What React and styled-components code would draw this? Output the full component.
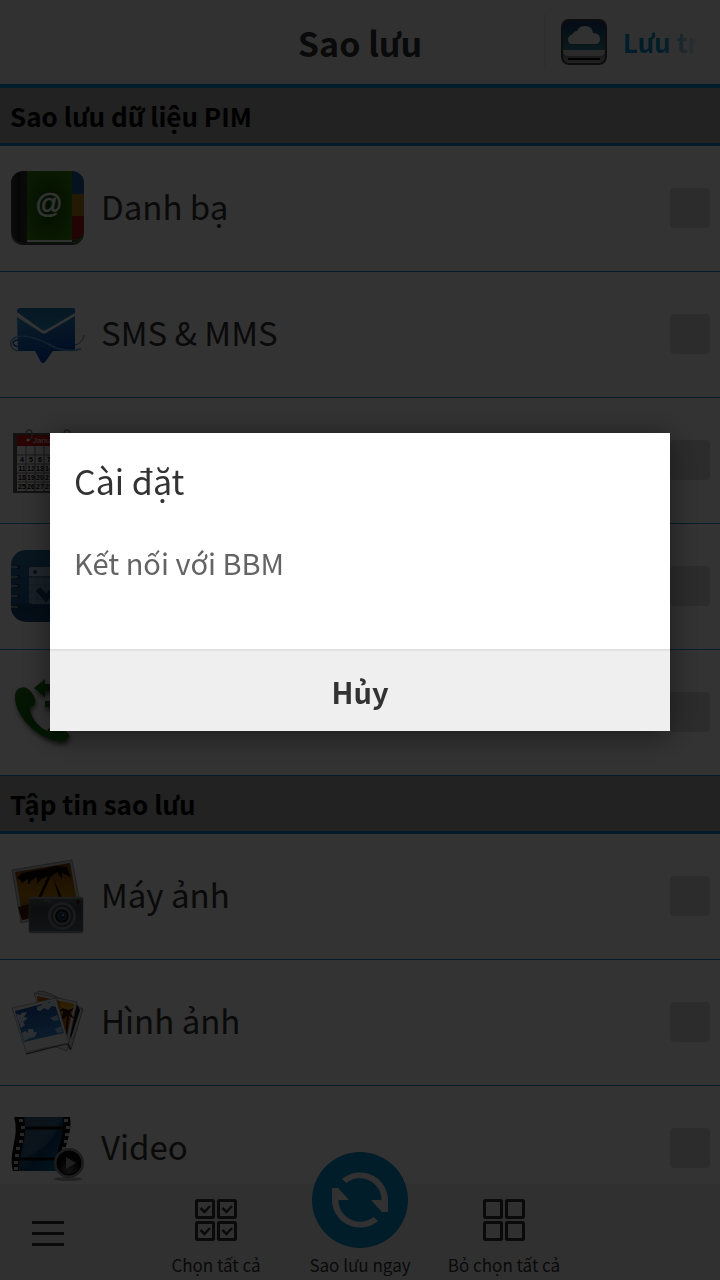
import styled, { createGlobalStyle } from "styled-components";

const GlobalStyle = createGlobalStyle`
  * {
    box-sizing: border-box;
  }
  body {
    margin: 0;
    background: #fcfcfc;
    font-family: "Noto Sans CJK SC", "Noto Sans", sans-serif;
    color: #323232;
  }
  button, input {
    font: inherit;
    color: inherit;
  }
`;

const Screen = styled.div`
  height: 100vh;
  display: flex;
  flex-direction: column;
  overflow: hidden;
`;

const Header = styled.header`
  flex: none;
  height: 88px;
  display: grid;
  grid-template-columns: 176px 1fr 176px;
  align-items: center;
  background: #f2f2f2;
  border-bottom: 4px solid #0092cc;
`;
const Title = styled.h1`
  grid-column: 2;
  margin: 0;
  padding-top: 2px;
  font-size: 34px;
  line-height: 42px;
  font-weight: 700;
  text-align: center;
`;
const Storage = styled.a`
  height: 56px;
  padding-left: 15px;
  display: flex;
  align-items: center;
  gap: 16px;
  border-left: 2px solid #e4e4e4;
  color: #0092cc;
  text-decoration: none;
`;
const StorageName = styled.span`
  font-size: 26px;
  line-height: 40px;
  font-weight: 700;
  white-space: nowrap;
  mask-image: linear-gradient(to right, #000 50%, transparent 100%);
`;

const List = styled.main`
  flex: 1;
  min-height: 0;
  overflow: hidden;
`;
const SectionTitle = styled.h2`
  margin: 0;
  height: 58px;
  padding: 0 10px;
  background: #a8a8a8;
  border-bottom: 3px solid #0092cc;
  color: #000;
  font-size: 26px;
  line-height: 55px;
  font-weight: 700;
`;
const Row = styled.label`
  height: 126px;
  padding: 0 10px 1px;
  display: flex;
  align-items: center;
  gap: 16px;
  border-bottom: 1px solid #0092cc;
`;
const RowName = styled.span`
  flex: 1;
  padding-bottom: 4px;
  font-size: 33px;
  line-height: 40px;
`;
const CheckBox = styled.input`
  appearance: none;
  width: 40px;
  height: 40px;
  margin: 0;
  border-radius: 4px;
  background: #dcdcdc;
  &:checked {
    background: #0092cc;
  }
`;

const ActionBar = styled.footer`
  flex: none;
  height: 96px;
  display: grid;
  grid-template-columns: repeat(5, 1fr);
  background: #f0f0f0;
`;
const Action = styled.button`
  padding: 0 0 3px;
  border: none;
  background: none;
  display: flex;
  flex-direction: column;
  align-items: center;
  justify-content: flex-end;
  gap: 12px;
  font-size: 17px;
  line-height: 24px;
  white-space: nowrap;
`;
const MainAction = styled(Action)`
  gap: 5px;
  margin-top: -32px;
`;
const MenuButton = styled.button`
  padding: 3px 32px 0;
  border: none;
  background: none;
  display: flex;
  align-items: center;
`;

const Overlay = styled.div`
  position: fixed;
  inset: 0;
  padding: 0 50px 116px;
  display: flex;
  align-items: center;
  background: rgba(0, 0, 0, 0.8);
`;
const Dialog = styled.section`
  width: 100%;
  background: #fff;
  box-shadow: 0 4px 30px rgba(0, 0, 0, 0.5);
`;
const DialogBody = styled.div`
  padding: 26px 24px 66px;
`;
const DialogTitle = styled.h2`
  margin: 0 0 38px;
  font-size: 34px;
  line-height: 44px;
  font-weight: 400;
`;
const DialogOption = styled.button`
  display: block;
  padding: 0;
  border: none;
  background: none;
  color: #646464;
  font-size: 29px;
  line-height: 42px;
`;
const DialogCancel = styled.button`
  width: 100%;
  height: 82px;
  padding: 0;
  border: none;
  border-top: 2px solid #e1e1e1;
  background: #efefef;
  font-size: 29px;
  line-height: 40px;
  font-weight: 700;
`;

const ItemSvg = ({ children }) => (
  <svg width="75" height="74" viewBox="0 0 75 74" overflow="visible" aria-hidden="true">
    {children}
  </svg>
);

const ContactsIcon = () => (
  <ItemSvg>
    <defs>
      <clipPath id="bookClip">
        <rect x="1" y="0" width="73" height="72" rx="12" />
      </clipPath>
      <radialGradient id="bookGreen" cx=".5" cy=".5" r=".75">
        <stop offset="0" stopColor="#004400" />
        <stop offset=".5" stopColor="#2a7008" />
        <stop offset="1" stopColor="#3a9010" />
      </radialGradient>
      <linearGradient id="spine" x2="1">
        <stop offset="0" stopColor="#444" />
        <stop offset=".5" stopColor="#222" />
        <stop offset="1" stopColor="#333" />
      </linearGradient>
    </defs>
    <rect x="1" y="1" width="73" height="73" rx="12" fill="#444" />
    <g clipPath="url(#bookClip)">
      <rect width="75" height="75" fill="#eee" />
      <rect width="17" height="75" fill="url(#spine)" />
      <rect x="17" width="45" height="69" fill="url(#bookGreen)" />
      <rect x="62" width="12" height="23" fill="#1a5a9c" />
      <rect x="62" y="23" width="12" height="22" fill="#b48010" />
      <path d="M62 45h12v15q0 9-12 9z" fill="#a81818" />
      <path d="M62 69q9 0 12-8v6q-3 5-9 5H17v-1h45z" fill="#247010" />
    </g>
    <text
      x="39"
      y="42"
      textAnchor="middle"
      fontSize="27"
      fontFamily="Liberation Sans"
      fill="#fff"
      stroke="#fff"
      strokeWidth=".6"
    >
      @
    </text>
  </ItemSvg>
);

const MessageIcon = () => (
  <ItemSvg>
    <defs>
      <linearGradient id="mail" x2=".3" y2="1">
        <stop offset="0" stopColor="#3496c8" />
        <stop offset="1" stopColor="#0040b4" />
      </linearGradient>
      <linearGradient id="flap" y2="1" x2="0">
        <stop offset="0" stopColor="#1c78b0" />
        <stop offset="1" stopColor="#2b8cc0" />
      </linearGradient>
    </defs>
    <path d="M7 13q1-2 3-2h53q2 0 2 2v3L36 33q-2 1-4 0L7 15z" fill="url(#flap)" />
    <path d="M7 20l25 16q2 1 4 0l29-17v33q0 2-2 2H43l-8 11q-2 2-4 0l-6-11H8z" fill="url(#mail)" />
    <path d="M8 54C-2 51-1 42 7 40c12-3 24 3 33 8s20 7 31 4" fill="none" stroke="#5aa8dc" strokeWidth="1.5" />
    <path d="M9 50C0 48 2 43 10 43c9 0 20 5 29 9" fill="none" stroke="#1468c0" strokeWidth="1.5" />
    <path d="M65 48c5-1 8-5 9-10" fill="none" stroke="#3c88b8" strokeWidth="1" />
  </ItemSvg>
);

// the sheet shows the first four days of each week
const weeks = [
  [4, 5, 6, 7],
  [11, 12, 13, 14],
  [18, 19, 20, 21],
  [25, 26, 27, 28],
];

const CalendarIcon = () => (
  <ItemSvg>
    <rect x="3" y="10" width="70" height="60" fill="#5a5a5a" />
    <rect x="7" y="12" width="63" height="11" fill="#d01010" />
    <rect x="7" y="23" width="63" height="45" fill="#f4f4f4" />
    <path
      d="M7 32h63M7 41h63M7 50h63M7 59h63M16 23v45M25 23v45M34 23v45M43 23v45M52 23v45M61 23v45"
      stroke="#777"
      strokeWidth="1"
    />
    <text x="23" y="20" fontSize="8" fontFamily="Liberation Sans" fill="#fff">Janu</text>
    <g fontSize="7" fontWeight="700" fontFamily="Liberation Sans" fill="#000" textAnchor="middle">
      {weeks.map((week, r) =>
        week.map((day, c) => (
          <text key={day} x={12 + c * 9} y={39 + r * 9}>
            {day}
          </text>
        ))
      )}
    </g>
    <path d="M16 11q0-4 3-4t3 4q0 5-3 6M54 11q0-4 3-4t3 4q0 5-3 6" fill="none" stroke="#888" strokeWidth="1.4" />
    <circle cx="18" cy="17" r="1.6" fill="#fff" />
  </ItemSvg>
);

const TasksIcon = () => (
  <ItemSvg>
    <defs>
      <linearGradient id="pad" x2="0" y2="1">
        <stop offset="0" stopColor="#2a70a0" />
        <stop offset=".7" stopColor="#1c5a90" />
        <stop offset=".8" stopColor="#12406e" />
        <stop offset="1" stopColor="#184c80" />
      </linearGradient>
    </defs>
    <rect x="1" y="1" width="73" height="72" rx="15" fill="url(#pad)" />
    <rect x="19" y="18" width="40" height="37" rx="3" fill="#78a4c4" />
    <path d="M19 27V21q0-3 3-3h34q3 0 3 3v6z" fill="#a8c4d8" />
    <path d="M27 29v26M35 29v26M43 29v26M19 36h40M19 43h40M19 50h40" stroke="#4a80a8" strokeWidth=".6" />
    <path d="M19 28h40" stroke="#2a5a84" strokeWidth="1" />
    <circle cx="25" cy="23" r="2" fill="#1c4a74" />
    <path d="M28 40l8 9 16-18" fill="none" stroke="#124478" strokeWidth="6" />
    {[18, 28, 37, 47, 58].map((y) => (
      <g key={y}>
        <circle cx="8" cy={y} r="2" fill="#0c2c48" />
        <path d={`M1 ${y}h7`} stroke="#aaa" strokeWidth="1.5" />
      </g>
    ))}
  </ItemSvg>
);

const CallIcon = () => (
  <ItemSvg>
    <defs>
      <linearGradient id="phone" x2="1" y2="1">
        <stop offset="0" stopColor="#287018" />
        <stop offset=".5" stopColor="#006400" />
        <stop offset="1" stopColor="#248024" />
      </linearGradient>
      <filter id="phoneShadow">
        <feDropShadow dx="1" dy="3" stdDeviation="2" floodOpacity=".6" />
      </filter>
    </defs>
    <g fill="url(#phone)" filter="url(#phoneShadow)">
      <path d="M10 13c6-3 13 4 15 11 1 5-1 7-5 8 0 10 7 19 17 24 4-6 8-5 14-2 6 2 9 5 8 8-2 5-9 6-17 3C23 59 4 38 5 21c0-4 2-7 5-8z" />
      <path d="M24 13L35 4v5h22v7H35v6zM35 26h20v6H35z" />
    </g>
  </ItemSvg>
);

const CameraIcon = () => (
  <ItemSvg>
    <defs>
      <linearGradient id="sunset" x2="0" y2="1">
        <stop offset="0" stopColor="#70380c" />
        <stop offset=".55" stopColor="#b87808" />
        <stop offset="1" stopColor="#702800" />
      </linearGradient>
      <linearGradient id="body" x2="0" y2="1">
        <stop offset="0" stopColor="#5c646c" />
        <stop offset=".3" stopColor="#3c444c" />
        <stop offset="1" stopColor="#586068" />
      </linearGradient>
    </defs>
    <path d="M2 11L62 1l9 48-60 15z" fill="#ccc" stroke="#777" strokeWidth=".7" />
    <path d="M5 13l55-9 8 44-55 13z" fill="url(#sunset)" />
    <path
      d="M7 19l5-5 10-2 12-2 12-3 11 1 4 11-4-3-5-2 0 6-5-7-4 3 2 7 9 20h-4L43 17l-2 0-11 24h-3l11-24-7 3-4 5 0-7-5 3-4 5 0-6-6 4-2-3z"
      fill="#100800"
    />
    <path d="M12 61l8-2V45l-12 3z" fill="#441400" />
    <rect x="19" y="38" width="54" height="36" rx="2" fill="url(#body)" stroke="#888" strokeWidth=".6" />
    <path d="M20 39h52" stroke="#999" strokeWidth="1.5" />
    <path d="M20 73h53" stroke="#bbb" strokeWidth="1" />
    <circle cx="52" cy="57" r="14" fill="#747c80" />
    <circle cx="52" cy="57" r="12" fill="#484c50" stroke="#aaa" strokeWidth=".8" />
    <circle cx="52" cy="57" r="8" fill="#181c20" stroke="#888" strokeWidth="2" />
    <circle cx="52" cy="57" r="4" fill="#182c58" stroke="#556" />
    <circle cx="53" cy="56" r="1" fill="#a8b8ff" />
    <circle cx="68" cy="43" r="2" fill="#401018" />
    <rect x="34" y="41" width="7" height="2" fill="#777" />
  </ItemSvg>
);

const PhotosIcon = () => (
  <ItemSvg>
    <defs>
      <linearGradient id="sky" x2=".3" y2="1">
        <stop offset="0" stopColor="#143c98" />
        <stop offset="1" stopColor="#3490d8" />
      </linearGradient>
    </defs>
    <path d="M25 10l3-4 8 1 37 17-12 40-5-2z" fill="#d8d8d8" stroke="#555" strokeWidth=".6" />
    <path d="M70 25l-3-6-8 32 2 2z" fill="#181818" />
    <path d="M24 8l43 9-10 49-16-6z" fill="#e8e8e8" stroke="#777" strokeWidth=".6" />
    <path d="M27 11l37 8-7 33-25-5z" fill="#b46000" />
    <path d="M50 16l14 3-4 14-9-5z" fill="#dc9c14" />
    <path d="M55 50l2-19-6 5 2-10-6 1 6-4 5 2 6-2-4 5 5 6-6-3-2 19z" fill="#321000" />
    <path d="M16 69l39-10 3 0 3 6" fill="none" stroke="#000" strokeOpacity=".6" strokeWidth="1.5" />
    <path d="M2 23l44-10 13 45-43 9z" fill="#f2f2f2" stroke="#888" strokeWidth=".6" />
    <path d="M5 26l39-10 10 32-40 9z" fill="url(#sky)" />
    <path
      d="M6 29l5 1 0-2 6-1-3 5 4 1-5 4 2 3-4 3zM27 22l5-2 2-3 5 1 5-3 2 7-4-1-4 4-4-2-4 3-3-1zM12 48l3-2 3 2 0-4 5 0 1 3 3 0-2 5-5 1-6 3z"
      fill="#dceaf8"
    />
    <path d="M40 33l7-3 2 5-5 1zM45 44l7-3 1 6-6 1z" fill="#a8c8ec" />
  </ItemSvg>
);

const holes = [10, 17, 24, 31, 38, 45, 52, 58];

const VideoIcon = () => (
  <ItemSvg>
    <defs>
      <linearGradient id="film" x2="1" y2="1">
        <stop offset="0" stopColor="#28405c" />
        <stop offset=".45" stopColor="#1d5078" />
        <stop offset=".6" stopColor="#083c70" />
        <stop offset="1" stopColor="#0878a8" />
      </linearGradient>
      <radialGradient id="play" cx=".5" cy=".8">
        <stop offset="0" stopColor="#555" />
        <stop offset="1" stopColor="#080808" />
      </radialGradient>
    </defs>
    <ellipse cx="58" cy="68" rx="14" ry="2" fill="#aaa" />
    <path d="M4 6h56c3 18-8 30-7 54H3C-2 40 10 26 4 6z" fill="#080808" />
    <path d="M14 6h39c3 18-9 34-7 54H9C9 40 18 26 14 6z" fill="url(#film)" />
    <path d="M14 6h38Q45 36 11 48C12 34 18 26 14 6z" fill="#fff" opacity=".12" />
    <path d="M15 17h39M10 48h38" stroke="#080808" strokeWidth="3" />
    {holes.map((y, i) => (
      <g key={y} fill="#ccc">
        <rect x={[9, 11, 10, 9, 6, 5, 4, 4][i]} y={y - 2} width="4" height="3" />
        <rect x={[54, 56, 55, 54, 52, 50, 48, 48][i]} y={y - 2} width="4" height="3" />
      </g>
    ))}
    <circle cx="59" cy="52" r="15" fill="#8a8a8a" />
    <circle cx="59" cy="52" r="12" fill="url(#play)" stroke="#000" />
    <path d="M56 46v12l10-6z" fill="#999" />
  </ItemSvg>
);

const CloudIcon = () => (
  <svg width="46" height="46" viewBox="0 0 46 46" aria-hidden="true">
    <defs>
      <linearGradient id="drive" x2="0" y2="1">
        <stop offset="0" stopColor="#243c78" />
        <stop offset=".5" stopColor="#1e6078" />
        <stop offset="1" stopColor="#3c8490" />
      </linearGradient>
      <linearGradient id="base" x2="0" y2="1">
        <stop offset=".7" stopColor="#666" />
        <stop offset="1" stopColor="#aaa" />
      </linearGradient>
    </defs>
    <rect x="1" y="1" width="44" height="44" rx="7" fill="url(#base)" stroke="#444" strokeWidth="2" />
    <path d="M2 8q0-6 6-6h30q6 0 6 6v24H2z" fill="url(#drive)" />
    <path d="M2 31h42q0 6-5 6H7q-5 0-5-6z" fill="#d4d4d4" />
    <path d="M7 39h32v2H7z" fill="#000" />
    <path d="M11 25q-4 0-4-5 1-4 5-5 1-3 4-3 2-5 8-5 7 0 8 7 7 0 7 6 0 5-5 5z" fill="#f4f4f4" />
  </svg>
);

const boxes = [
  [0, 0],
  [22, 0],
  [0, 22],
  [22, 22],
];

const GridIcon = ({ checked }) => (
  <svg width="42" height="42" viewBox="0 0 42 42" fill="none" stroke="#323232" aria-hidden="true">
    {boxes.map(([x, y]) => (
      <g key={`${x}-${y}`} transform={`translate(${x} ${y})`} strokeWidth="3">
        <rect x="1.5" y="1.5" width="17" height="17" rx="1" />
        {checked && <path d="M5.5 9l4 4 5.5-6" strokeWidth="2.5" />}
      </g>
    ))}
  </svg>
);

const arrow = "M30 27A28 28 0 0 1 76 47V60H70L59 48H69.5A21.5 21.5 0 0 0 34.5 31Z";

const SyncIcon = () => (
  <svg width="96" height="96" viewBox="0 0 96 96" aria-hidden="true">
    <circle cx="48" cy="48" r="48" fill="#0092cc" />
    <g fill="#f4f4f4">
      <path d={arrow} />
      <path d={arrow} transform="rotate(180 48 48)" />
    </g>
  </svg>
);

const MenuIcon = () => (
  <svg width="32" height="25" viewBox="0 0 32 25" aria-hidden="true">
    <path d="M0 1.5h32M0 12.5h32M0 23.5h32" stroke="#323232" strokeWidth="3" />
  </svg>
);

// rows behind the dialog keep their name for screen readers only
const sections = [
  {
    title: "Sao lưu dữ liệu PIM",
    items: [
      { name: "Danh bạ", Icon: ContactsIcon },
      { name: "SMS & MMS", Icon: MessageIcon },
      { name: "Lịch", Icon: CalendarIcon, covered: true },
      { name: "Ghi chú", Icon: TasksIcon, covered: true },
      { name: "Điện thoại", Icon: CallIcon, covered: true },
    ],
  },
  {
    title: "Tập tin sao lưu",
    items: [
      { name: "Máy ảnh", Icon: CameraIcon },
      { name: "Hình ảnh", Icon: PhotosIcon },
      { name: "Video", Icon: VideoIcon },
    ],
  },
];

const App = () => {
  return (
    <>
      <GlobalStyle />
      <Screen>
        <Header>
          <Title>Sao lưu</Title>
          <Storage href="#storage">
            <CloudIcon />
            <StorageName>Lưu tr</StorageName>
          </Storage>
        </Header>
        <List>
          {sections.map((section) => (
            <section key={section.title}>
              <SectionTitle>{section.title}</SectionTitle>
              {section.items.map(({ name, Icon, covered }) => (
                <Row key={name}>
                  <Icon />
                  <RowName>{!covered && name}</RowName>
                  <CheckBox type="checkbox" aria-label={name} />
                </Row>
              ))}
            </section>
          ))}
        </List>
        <ActionBar>
          <MenuButton aria-label="Menu">
            <MenuIcon />
          </MenuButton>
          <Action>
            <GridIcon checked />
            Chọn tất cả
          </Action>
          <MainAction>
            <SyncIcon />
            Sao lưu ngay
          </MainAction>
          <Action>
            <GridIcon />
            Bỏ chọn tất cả
          </Action>
        </ActionBar>
      </Screen>
      <Overlay>
        <Dialog role="dialog" aria-modal="true" aria-labelledby="dialog-title">
          <DialogBody>
            <DialogTitle id="dialog-title">Cài đặt</DialogTitle>
            <DialogOption>Kết nối với BBM</DialogOption>
          </DialogBody>
          <DialogCancel>Hủy</DialogCancel>
        </Dialog>
      </Overlay>
    </>
  );
};

export default App;
